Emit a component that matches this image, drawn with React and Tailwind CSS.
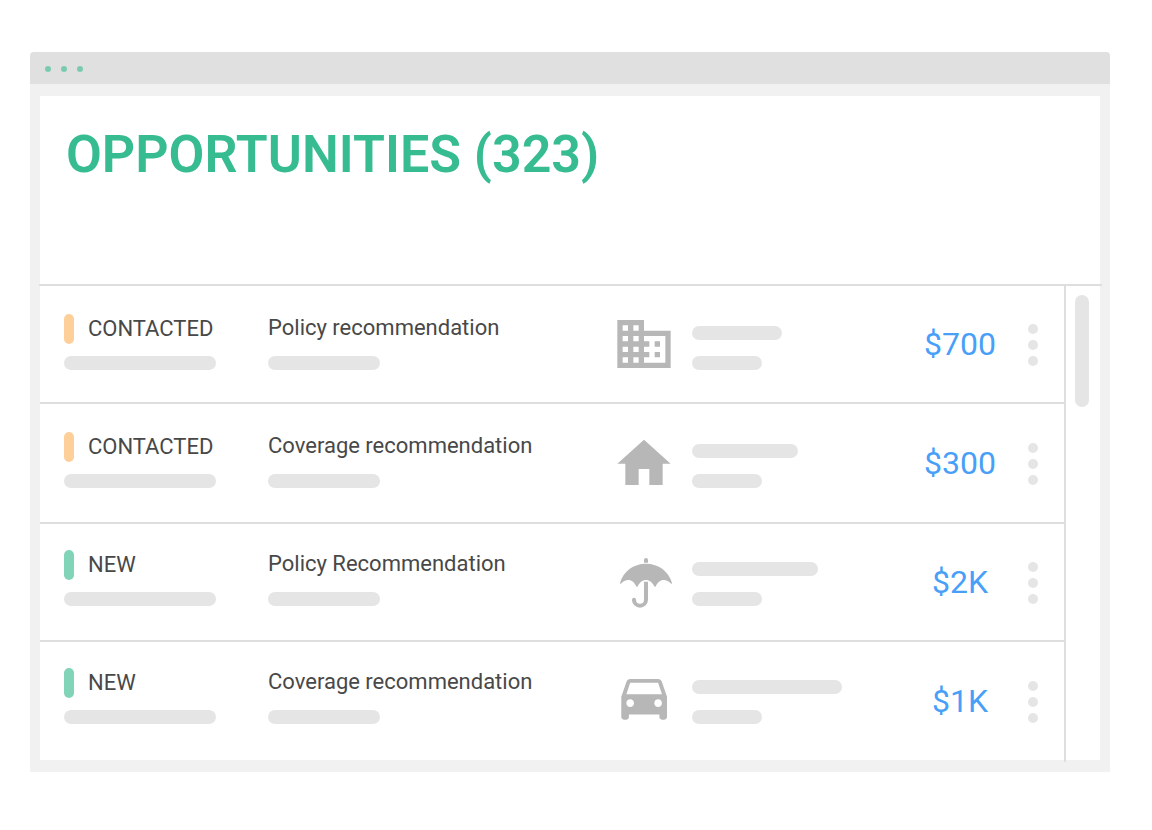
const BuildingIcon = () => (
  <svg viewBox="0 0 24 24" className="block size-16" fill="currentColor" aria-hidden="true">
    <path d="M12 7V3H2v18h20V7H12zM6 19H4v-2h2v2zm0-4H4v-2h2v2zm0-4H4V9h2v2zm0-4H4V5h2v2zm4 12H8v-2h2v2zm0-4H8v-2h2v2zm0-4H8V9h2v2zm0-4H8V5h2v2zm10 12h-8v-2h2v-2h-2v-2h2v-2h-2V9h8v10zm-2-8h-2v2h2v-2zm0 4h-2v2h2v-2z" />
  </svg>
);

const HomeIcon = () => (
  <svg viewBox="0 -0.25 24 24" className="block size-16" fill="currentColor" aria-hidden="true">
    <path d="M10 20v-6h4v6h5v-8h3L12 3 2 12h3v8z" />
  </svg>
);

const UmbrellaIcon = () => (
  <svg viewBox="0 0 64 64" className="block size-16" fill="currentColor" aria-hidden="true">
    <path d="M32 12.8V10a2 2 0 0 1 4 0v2.800z" />
    <path d="M8 33C11 21.500 21.500 13.700 34 13.700S57 21.500 60 33c.2.800-.6 1-1.100.5C56.800 31.400 54.500 30 51.700 30c-3.600 0-6 2.500-7.900 6.200-.3.700-1.100.7-1.500 0C40.200 32.500 37.700 30 34 30s-6.200 2.500-8.300 6.200c-.4.700-1.200.7-1.500 0C22.300 32.500 19.900 30 16.300 30c-2.800 0-5.100 1.400-7.200 3.500C8.600 34 7.800 33.800 8 33z" />
    <path
      d="M34 31.700V49.700a6 6 0 0 1-12 0"
      fill="none"
      stroke="currentColor"
      strokeWidth="4"
    />
    <circle cx="22" cy="49.700" r="2" />
  </svg>
);

const CarIcon = () => (
  <svg viewBox="-0.66 1.060 25.200 25.200" className="block size-16" fill="currentColor" aria-hidden="true">
    <path d="M18.920 6.010C18.720 5.420 18.160 5 17.500 5h-11c-.66 0-1.210.42-1.420 1.010L3 12v8c0 .55.45 1 1 1h1c.55 0 1-.45 1-1v-1h12v1c0 .55.45 1 1 1h1c.55 0 1-.45 1-1v-8l-2.080-5.990zM6.500 16c-.83 0-1.500-.67-1.500-1.500S5.670 13 6.500 13s1.500.67 1.500 1.500S7.330 16 6.500 16zm11 0c-.83 0-1.500-.67-1.500-1.500s.67-1.500 1.500-1.500 1.500.67 1.500 1.500-.67 1.500-1.500 1.500zM5 11l1.500-4.500h11L19 11H5z" />
  </svg>
);

const rows = [
  {
    status: "CONTACTED",
    marker: "bg-[#ffcf99]",
    title: "Policy recommendation",
    Icon: BuildingIcon,
    bar: "w-[90px]",
    amount: "$700",
    height: "h-[118px] border-b-2",
    pad: "pt-7",
  },
  {
    status: "CONTACTED",
    marker: "bg-[#ffcf99]",
    title: "Coverage recommendation",
    Icon: HomeIcon,
    bar: "w-[106px]",
    amount: "$300",
    height: "h-[120px] border-b-2",
    pad: "pt-7",
  },
  {
    status: "NEW",
    marker: "bg-[#82d4b9]",
    title: "Policy Recommendation",
    Icon: UmbrellaIcon,
    bar: "w-[126px]",
    amount: "$2K",
    height: "h-[118px] border-b-2",
    pad: "pt-[26px]",
  },
  {
    status: "NEW",
    marker: "bg-[#82d4b9]",
    title: "Coverage recommendation",
    Icon: CarIcon,
    bar: "w-[150px]",
    amount: "$1K",
    height: "h-[118px]",
    pad: "pt-[26px]",
  },
];

const Bar = ({ width }) => <div className={`h-3.5 rounded-full bg-[#e5e5e5] ${width}`} />;

function Row({ row }) {
  const { status, marker, title, Icon, bar, amount, height, pad } = row;
  const cell = `p-0 border-[#dedede] ${height}`;
  return (
    <tr>
      <td className={`${cell} align-top`}>
        <div className={`flex flex-col gap-3 pl-6 ${pad}`}>
          <div className="flex items-center gap-3.5">
            <span className={`h-[30px] w-2.5 rounded-full ${marker}`} />
            <span className="text-[22px] leading-[30px]">{status}</span>
          </div>
          <Bar width="w-[152px]" />
        </div>
      </td>
      <td className={`${cell} align-top`}>
        <div className={`flex flex-col gap-3.5 ${pad}`}>
          <span className="text-[22px] leading-7 whitespace-nowrap">{title}</span>
          <Bar width="w-28" />
        </div>
      </td>
      <td className={`${cell} align-middle text-[#b7b7b7]`}>
        <Icon />
      </td>
      <td className={`${cell} align-top`}>
        <div className={pad}>
          <div className="flex flex-col gap-4 pt-3 pl-4">
            <Bar width={bar} />
            <Bar width="w-[70px]" />
          </div>
        </div>
      </td>
      <td className={`${cell} text-center align-middle text-[32px] leading-10 text-[#489ff8]`}>
        {amount}
      </td>
      <td className={`${cell} align-middle`}>
        <button
          type="button"
          aria-label={`Options for ${title}`}
          className="mt-0.5 ml-2 flex flex-col gap-1.5"
        >
          <span className="size-2.5 rounded-full bg-[#e5e5e5]" />
          <span className="size-2.5 rounded-full bg-[#e5e5e5]" />
          <span className="size-2.5 rounded-full bg-[#e5e5e5]" />
        </button>
      </td>
    </tr>
  );
}

export default function App() {
  return (
    <div className="min-h-screen bg-white pt-[52px] pr-[42px] pb-[58px] pl-[30px] font-[Roboto,sans-serif] text-[#484848]">
      <div className="overflow-hidden rounded-t bg-[#f1f1f1]">
        <div className="flex h-8 items-center gap-2.5 bg-[#e0e0e0] pt-0.5 pl-[15px]">
          <span className="size-1.5 rounded-full bg-[#7bcbb1]" />
          <span className="size-1.5 rounded-full bg-[#7bcbb1]" />
          <span className="size-1.5 rounded-full bg-[#7bcbb1]" />
        </div>
        <main className="mx-2.5 my-3 bg-white">
          <header className="-mr-0.5 -ml-px h-[190px] border-b-2 border-[#dedede] pt-[27px] pl-[27px]">
            <h1 className="text-[52px] leading-[64px] font-semibold text-[#37bb91]">
              OPPORTUNITIES (323)
            </h1>
          </header>
          <div className="flex">
            <table
              aria-label="Opportunities"
              className="min-w-0 flex-1 table-fixed border-separate border-spacing-0"
            >
              <colgroup>
                <col className="w-[228px]" />
                <col className="w-[344px]" />
                <col className="w-16" />
                <col />
                <col className="w-[120px]" />
                <col className="w-11" />
              </colgroup>
              <tbody>
                {rows.map((row, i) => (
                  <Row key={i} row={row} />
                ))}
              </tbody>
            </table>
            <div className="-mb-0.5 w-9 border-l-2 border-[#dedede] pt-[9px] pl-[9px]">
              <div className="h-28 w-3.5 rounded-full bg-[#e5e5e5]" />
            </div>
          </div>
        </main>
      </div>
    </div>
  );
}
